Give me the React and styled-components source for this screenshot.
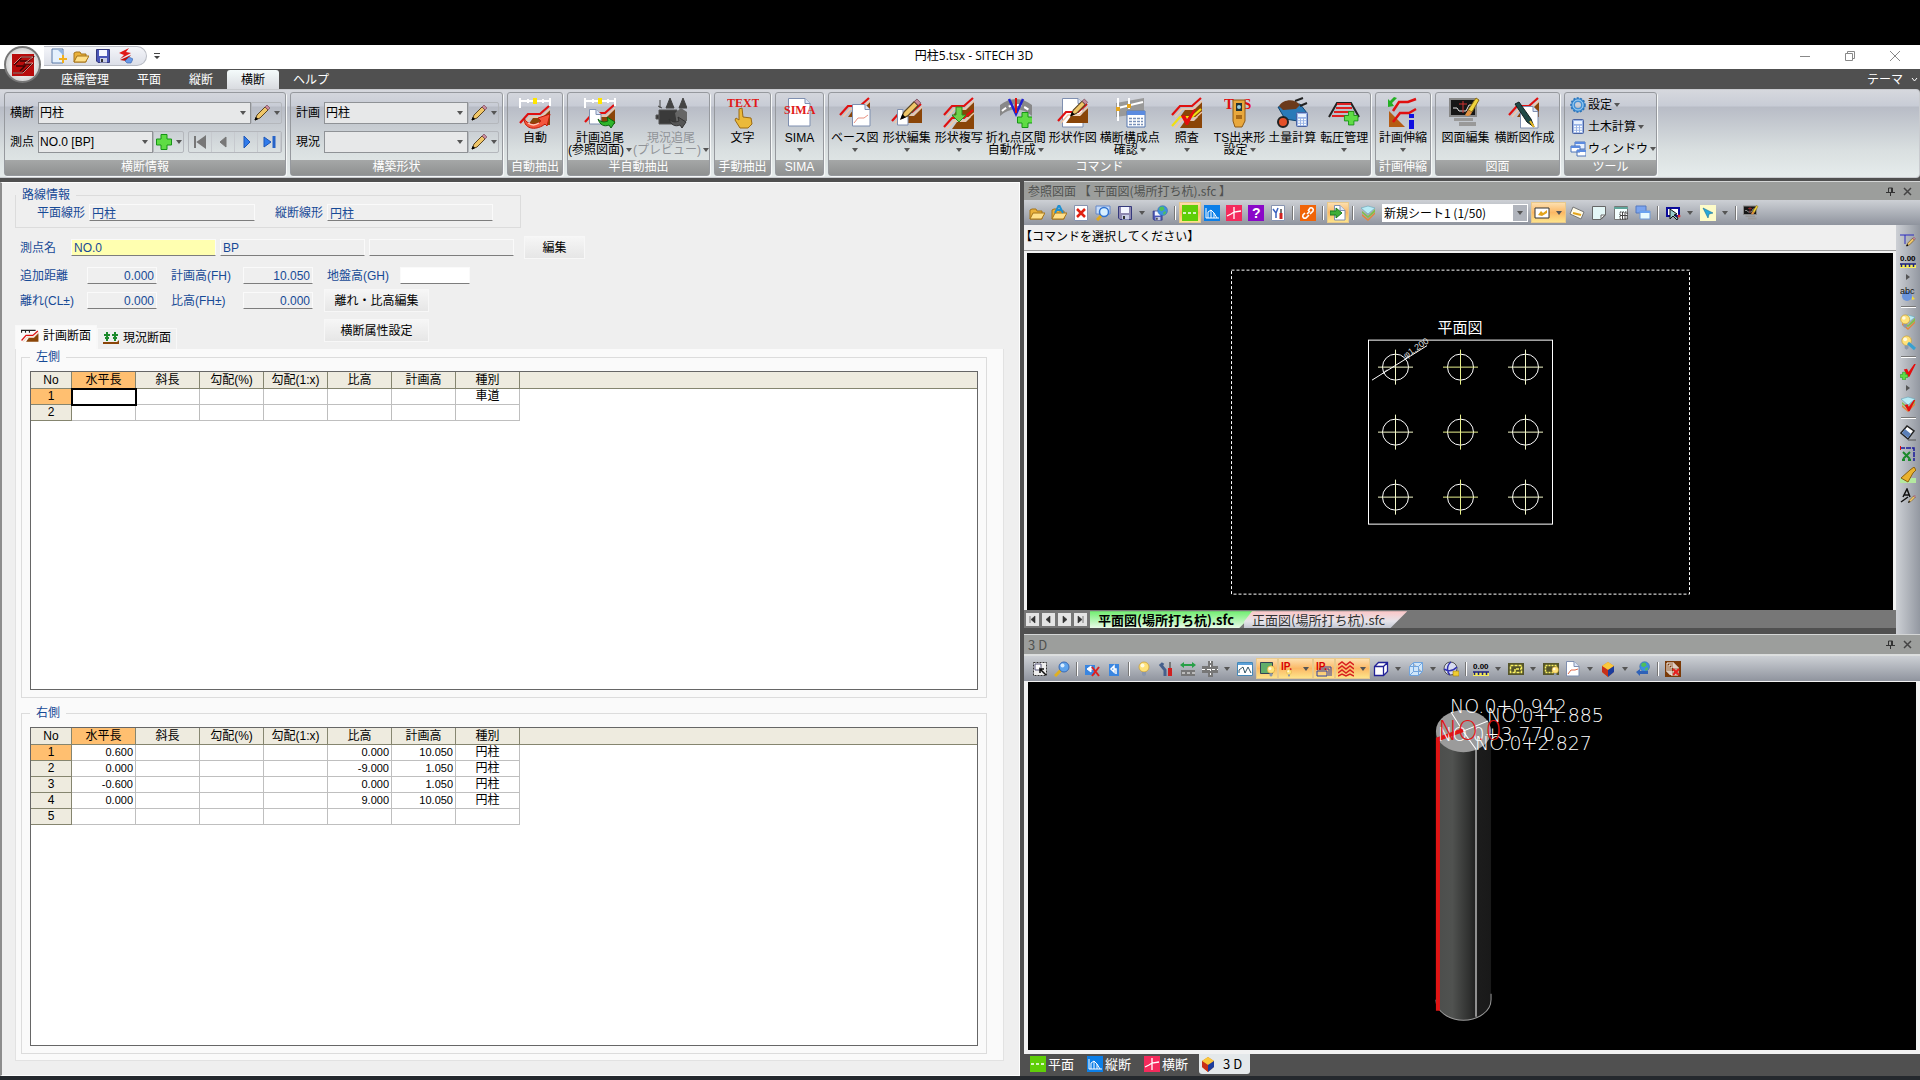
import React from "react";
import styled, { createGlobalStyle, css } from "styled-components";

const GlobalStyle = createGlobalStyle`
    * { box-sizing: border-box; }
    body {
        margin: 0;
        background: #000;
        font-family: "Liberation Sans", "Noto Sans CJK JP", sans-serif;
        font-size: 12px;
        line-height: 16px;
        color: #000;
    }
    button, input, select { font: inherit; color: inherit; margin: 0; padding: 0; }
    button { border: 0; background: none; }
`;

/* ---------- icons ---------- */

const Slope = ({ y = 0, fill = "#8a4508", line = "#e01010" }) => (
    <g transform={`translate(0 ${y})`}>
        <path d="M9 20 14 13H23L31 5V20Z" fill={fill} />
        <path d="M4 20 11 12H22L31 4" fill="none" stroke="#f0c8a8" strokeWidth="1.500" />
        <path d="M1 18 9 9H21L30 1" fill="none" stroke={line} strokeWidth="2.200" />
    </g>
);
const Ruler = () => (
    <g>
        <path d="M1 4H31M1 1V11M31 1V9M9 2V6M24 2V6" stroke="#fff" strokeWidth="2" />
        <path d="M16 1V7" stroke="#ffe600" strokeWidth="4" />
    </g>
);
const Sheet = ({ x = 0, y = 0, w = 15, h = 18 }) => (
    <g transform={`translate(${x} ${y})`}>
        <path d={`M.5 .5H${w - 5}L${w} 5.5V${h}H.5Z`} fill="#fff" stroke="#7f8fb0" />
        <path d={`M${w - 5} .5V5.5H${w}`} fill="#dbe5f7" stroke="#7f8fb0" />
    </g>
);
const Pen = ({ x = 0, y = 0, s = 1 }) => (
    <g transform={`translate(${x} ${y}) scale(${s})`}>
        <path d="M1 15 3 10 11 2 14 5 6 13Z" fill="#f0c668" stroke="#5a4420" />
        <path d="M11 2 13 0 16 3 14 5Z" fill="#c88a9a" stroke="#704050" strokeWidth=".6" />
        <path d="M1 15 2 12.500 3.500 14Z" fill="#000" stroke="#000" />
    </g>
);
const Plus = ({ x = 0, y = 0, s = 1 }) => (
    <path transform={`translate(${x} ${y}) scale(${s})`} d="M5 .5H11V5H15.500V11H11V15.500H5V11H.5V5H5Z" fill="#5fdc45" stroke="#179417" />
);
const GreenArrow = ({ fill = "#2fb52a", stroke = "#0c6210" }) => (
    <path d="M14 22C18 26 21 25 24 24L23 20 31 25 27 31 25 28C20 30 16 28 14 22Z" fill={fill} stroke={stroke} />
);
const Bulb = ({ x = 0, y = 0, s = 1 }) => (
    <g transform={`translate(${x} ${y}) scale(${s})`}>
        <circle cx="8" cy="6" r="5" fill="#ffe27a" stroke="#c99b2c" strokeWidth=".7" />
        <circle cx="6.500" cy="4.500" r="2" fill="#fffbe0" />
        <path d="M6 11H10V14L8 15.500 6 14Z" fill="#8c98ac" />
    </g>
);
const Check = ({ x = 0, y = 0, s = 1 }) => (
    <path transform={`translate(${x} ${y}) scale(${s})`} d="M1 7 5 6 7 10 14 0H16L8 16H6Z" fill="#e50d0d" />
);
const Layers = () => (
    <g>
        <path d="M2 9 8 14 15 7V9L8 16 2 11Z" fill="#e3863c" />
        <path d="M2 6 8 11 15 4V7L8 13 2 8Z" fill="#7fc04b" />
        <path d="M1 3 8 1 15 3 8 9Z" fill="#b8ecf6" stroke="#67a3b5" strokeWidth=".6" />
    </g>
);
const Folder = () => (
    <g>
        <path d="M1 14V5L3 4H7L8 6H13V14Z" fill="#eab13a" stroke="#a5741a" />
        <path d="M1 14 4 8H16L12.500 14Z" fill="#ffe08a" stroke="#a5741a" />
    </g>
);
const Disk = ({ fill = "#4a56b8" }) => (
    <g>
        <path d="M1.500 1.500H14.500V14.500H3L1.500 13Z" fill={fill} stroke="#34397c" />
        <path d="M4 2H12V8H4Z" fill="#f4f6ff" />
        <path d="M5 10H12V14.500H5Z" fill="#c9cde6" />
        <path d="M6 11H8V14H6Z" fill="#333" />
    </g>
);
const Globe = ({ x = 0, y = 0, s = 1 }) => (
    <g transform={`translate(${x} ${y}) scale(${s})`}>
        <circle cx="8" cy="8" r="7" fill="#3d8fe0" stroke="#2a62a8" strokeWidth=".7" />
        <path d="M4 3 9 2 11 6 7 9 3 7ZM9 10 13 9 12 13 9 14Z" fill="#4fbf58" />
    </g>
);
const Ip = () => (
    <text x="0" y="9" fontSize="10" fontWeight="700" fill="#d80000" fontFamily="Liberation Sans">IP.</text>
);
const Calc = ({ x = 0, y = 0 }) => (
    <g transform={`translate(${x} ${y})`}>
        <rect x=".5" y=".5" width="11" height="14" rx="1" fill="#9ab4e6" stroke="#4a62a0" />
        <path d="M2 2H10V5H2Z" fill="#e9f2ff" />
        <path d="M2 7.500H10M2 10H10M2 12.500H10" stroke="#fff" strokeWidth="1.500" strokeDasharray="2 1" />
    </g>
);
const Screen = () => (
    <g>
        <rect x="1" y="2" width="26" height="17" fill="#161616" stroke="#888" strokeWidth="2" />
        <path d="M4 11H8L10 14H17L20 8H24" fill="none" stroke="#e8e8e8" />
        <path d="M14 4V16M10 7H18" stroke="#d03030" />
        <path d="M5 21H24V24H5ZM10 25H27V29H10Z" fill="#999" />
        <path d="M19 13 27 1 30 3 23 15Z" fill="#f0d43c" stroke="#87681b" />
        <path d="M19 13 23 15C22 19 18 20 16 18Z" fill="#e09040" />
    </g>
);

const icons32 = {
    auto: <><Slope y={8} /><Ruler /><path d="M5 21C8 28 17 29 22 24L19 21 31 17 28 29 26 27C19 33 5 34 5 21Z" fill="#f4563c" stroke="#c01808" /><path d="M9 26C13 29 17 28 20 26" stroke="#ffc8b8" strokeWidth="1.500" fill="none" /></>,
    trace: <><Slope y={7} /><Ruler /><Sheet x={5} y={12} w={12} h={15} /><GreenArrow /></>,
    preview: <><path d="M5 3V11M3 9 7 11M15 1 11 11H19ZM28 1 24 11H32Z" stroke="#444" fill="#444" /><path d="M4 13H22V27H4ZM1 18H4V22H1Z" fill="#3a3a3a" stroke="#555" /><path d="M20 16 26 11 32 15V24L22 27Z" fill="#666" /><GreenArrow fill="#555" stroke="#333" /></>,
    text: <><text x="0" y="10" fontSize="12" fontWeight="700" fill="#e01818" fontFamily="Liberation Serif">TEXT</text><path d="M12 12 15 11 16 20 24 21 25 27 21 31H13L8 23 9 21 12 23Z" fill="#eab93a" stroke="#9a6a14" /></>,
    sima: <><Sheet x={4} y={1} w={22} h={28} /><text x="0" y="17" fontSize="12" fontWeight="700" fill="#e01818" fontFamily="Liberation Serif">SIMA</text></>,
    base: <><Slope /><Sheet x={13} y={7} w={18} h={22} /><path d="M15 26 19 21H25L29 18" stroke="#e89080" fill="none" /></>,
    edit: <><Slope y={6} /><Sheet x={6} y={12} w={11} h={16} /><Pen x={9} y={2} s={1.300} /></>,
    copy: <><Slope /><Slope y={12} /><path d="M13 10H19V18H23L16 25 9 18H13Z" fill="#6fd04a" stroke="#2a8c20" /></>,
    bend: <><path d="M0 8C10 0 22 0 32 8V19C22 10 10 10 0 19Z" fill="#888" /><path d="M2 14C11 6 21 6 30 14" fill="none" stroke="#fff" strokeWidth="2" strokeDasharray="5 3" /><path d="M9 2 16 17 23 2" fill="none" stroke="#2020d0" strokeWidth="2.500" /><path d="M16 1V16" stroke="#e01010" strokeWidth="2" /><Plus x={17} y={15} /></>,
    draw: <><Sheet x={5} y={1} w={21} h={29} /><Slope y={6} /><Pen x={13} y={2} s={1.100} /></>,
    points: <><path d="M2 6 30 1V16L2 20Z" fill="#999" /><path d="M4 1V24M15 1V12M4 11 29 5" stroke="#fff" strokeWidth="2" /><path d="M2 10H6V14H2ZM13 7H17V11H13Z" fill="#e6a51c" /><path d="M13 14H31V30H13Z" fill="#fff" stroke="#5577b0" /><path d="M13 14H31V18H13Z" fill="#5b8be0" /><path d="M15 21.500H29M15 24.500H29M15 27.500H29" stroke="#7890b8" strokeWidth="1.500" strokeDasharray="3 1" /></>,
    verify: <><Slope /><Slope y={11} line="#f0e010" /><Check x={9} y={12} /></>,
    ts: <><text x="0" y="12" fontSize="15" fontWeight="700" fill="#e01010" fontFamily="Liberation Serif">T</text><text x="19" y="12" fontSize="15" fontWeight="700" fill="#e01010" fontFamily="Liberation Serif">S</text><path d="M9 3H21V24L18 30H11L9 24Z" fill="#e9a83c" stroke="#8e5a14" /><path d="M12 6H18V14H12Z" fill="#233" /><circle cx="15" cy="10" r="2" fill="#9cd" /><path d="M12 18H18V22H12Z" fill="#a86a18" /></>,
    barrow: <><path d="M2 10 24 7 31 16 22 24 9 22Z" fill="#2a7ab8" stroke="#10456f" /><path d="M3 9C7 2 19 1 24 8L20 12 7 13Z" fill="#6b3a1c" /><circle cx="7" cy="25" r="5" fill="#e45028" stroke="#222" strokeWidth="2" /><path d="M19 4 27 1M24 9 31 6" stroke="#222" strokeWidth="2" /><Calc x={20} y={15} /></>,
    roller: <><path d="M1 20 9 6H23L31 20" fill="none" stroke="#222" strokeWidth="2" /><path d="M9 7H23M8 11H24M6 15H26M4 19H28" stroke="#e02020" strokeWidth="2" /><Plus x={16} y={14} s={0.900} /></>,
    stretch: <><path d="M2 14 18 30H2Z" fill="#b55c14" /><path d="M6 14 12 5H21L29 2M6 25 13 16H22L29 12" fill="none" stroke="#e01010" strokeWidth="2.500" /><path d="M10 1 5 6 7 9 1 10V2L3 4 7 0Z" fill="#23b023" /><path d="M22 17H27V21H22ZM22 23H27V32H22Z" fill="#1010e0" /></>,
    screen: <Screen />,
    section: <><Slope /><Sheet x={12} y={9} w={18} h={22} /><path d="M7 7 11 5 23 22 26 30 19 25Z" fill="#1f4a48" stroke="#102020" /><path d="M22 24 26 30" stroke="#e8b820" strokeWidth="2" /></>,
};

const icons16 = {
    newFile: <><path d="M1 1H12V15H1Z" fill="#e5f1fd" stroke="#5a7aa8" /><path d="M7 2H12V7Z" fill="#8fb4e0" /><path d="M8 11H16M12 7V15" stroke="#f2b01e" strokeWidth="2" /></>,
    folder: <Folder />,
    disk: <Disk />,
    brand: <><path d="M2 5 12 0 9 4 14 5 3 11 7 7Z" fill="#e01818" /><path d="M3 12 14 7 9 13Z" fill="#c01010" /><path d="M8 13 12 9 16 11 14 15H10Z" fill="#6a9ae8" stroke="#345fa8" strokeWidth=".6" /></>,
    pen: <Pen />,
    plus: <Plus />,
    first: <path d="M3 2V14M13 3 6 8 13 13Z" fill="#777" stroke="#777" strokeWidth="2" />,
    prev: <path d="M11 3 5 8 11 13Z" fill="#777" stroke="#777" />,
    next: <path d="M6 2 12 8 6 14Z" fill="#2f7bea" stroke="#1d56b8" />,
    last: <><path d="M3 3 10 8 3 13Z" fill="#2f7bea" stroke="#1d56b8" /><path d="M13 2V14" stroke="#2563c8" strokeWidth="3" /></>,
    gear: <><circle cx="8" cy="8" r="5" fill="none" stroke="#3f8fd6" strokeWidth="4" /><circle cx="8" cy="8" r="7" fill="none" stroke="#2872b8" strokeWidth="1.500" strokeDasharray="2 1.500" /><circle cx="8" cy="8" r="5" fill="none" stroke="#a8d4f4" /></>,
    calc: <Calc x={2} y={0} />,
    windows: <><path d="M5 1H15V8H5Z" fill="#e8f1ff" stroke="#4a72b8" /><path d="M5 1H15V3H5Z" fill="#5b8be0" /><path d="M1 5H10V11H1ZM7 9H16V15H7Z" fill="#fff" stroke="#4a72b8" /><path d="M1 5H10V7H1ZM7 9H16V11H7Z" fill="#5b8be0" /></>,
    plan: <><path d="M0 0H16V16H0Z" fill="#5fce08" /><path d="M1 8H16" stroke="#fff" strokeWidth="1.500" strokeDasharray="3 2" /></>,
    profile: <><path d="M0 0H16V16H0Z" fill="#0b7fe8" /><path d="M2 3V13H15M4 13V7L7 5 10 8 13 13M7 5V13M10 8V13" fill="none" stroke="#fff" /></>,
    cross: <><path d="M0 0H16V16H0Z" fill="#f42a5c" /><path d="M1 11 5 9 8 7 15 6M8 2V14" fill="none" stroke="#fff" strokeWidth="1.300" /></>,
    help: <><path d="M0 0H16V16H0Z" fill="#8a08c8" /><text x="4" y="13" fontSize="14" fontWeight="700" fill="#fff" fontFamily="Liberation Sans">?</text></>,
    folderA: <><Folder /><path d="M4 8 8 0 12 8M5 5H11" fill="none" stroke="#208fd0" strokeWidth="2" /></>,
    close: <><path d="M1.500 .5H14.500V15.500H1.500Z" fill="#fff" stroke="#8794b0" /><path d="M4 4 12 12M12 4 4 12" stroke="#e02010" strokeWidth="2.500" /></>,
    search: <><path d="M1 1H15V9H1Z" fill="#c7dcf8" stroke="#6487c8" /><circle cx="9" cy="7" r="4.500" fill="#d8f0ff" stroke="#2f72d0" strokeWidth="1.500" /><path d="M6 11 2 15" stroke="#e0a820" strokeWidth="3" /></>,
    grayDisk: <Disk fill="#8e88b0" />,
    globeDisk: <><g transform="translate(0 5) scale(.7)"><Disk /></g><Globe x={5} s={0.700} /></>,
    tools: <><path d="M1.500 .5H14.500V15.500H1.500Z" fill="#fff" stroke="#8794b0" /><path d="M3 4 6 8V13M8 3 6 8" stroke="#3a62c0" strokeWidth="1.500" fill="none" /><path d="M11 4V8" stroke="#777" strokeWidth="2" /><path d="M11 8V14" stroke="#d02020" strokeWidth="3" /></>,
    wrench: <><path d="M2 3 7 9V15M5 2 3 5" stroke="#46608c" strokeWidth="3" fill="none" /><path d="M12 1V8" stroke="#777" strokeWidth="2" /><path d="M12 7V15" stroke="#d02020" strokeWidth="4" /></>,
    link: <><path d="M0 0H16V16H0Z" fill="#f06408" /><path d="M7 9 10 6M5 8 3 10C2 12 4 14 6 13L9 10M8 6 10 3C12 2 14 4 13 6L10 9" fill="none" stroke="#fff" strokeWidth="1.600" /></>,
    importDoc: <><Sheet x={4} w={11} h={15} /><path d="M0 6H6V3L12 8 6 13V10H0Z" fill="#3fae38" stroke="#1d7a20" /></>,
    layers: <Layers />,
    picture: <><path d="M1 3H15V13H1Z" fill="#fff" stroke="#333" /><path d="M4 10 7 6 9 8 13 5V8L8 11Z" fill="#e2a41c" /></>,
    card: <><path d="M4 2 15 7 12 14 1 9Z" fill="#fffbe8" stroke="#777" /><path d="M4 8 12 10" stroke="#e2a41c" strokeWidth="2" /></>,
    page: <><path d="M1.500 1.500H14.500V10L10 14.500H1.500Z" fill="#e4f6f6" stroke="#666" /><path d="M10 14V10H14Z" fill="#fff" stroke="#666" /></>,
    pageGrid: <><path d="M1.500 1.500H14.500V14.500H1.500Z" fill="#f4ffff" stroke="#777" /><path d="M1 3H15" stroke="#5fa59a" strokeWidth="2" /><path d="M7 7H14V14H7Z" fill="#fff" stroke="#333" strokeDasharray="1.500 1" /><path d="M9.500 7V14M12 7V14M7 10.500H14" stroke="#444" /></>,
    cascade: <><path d="M1 1H11V8H1Z" fill="#7ba4ee" stroke="#5578c0" /><path d="M5 6H15V14H5Z" fill="#e8fafe" stroke="#6e9ad8" /><path d="M5 6H15V8H5Z" fill="#6aa2f0" /></>,
    select: <><path d="M2 3H14V11H2Z" fill="#fff" stroke="#0a0a9a" strokeWidth="2" /><path d="M5 4V14L8 11 12 15 13 13 9 10 12 9Z" fill="#9cc" stroke="#111" /><circle cx="14" cy="11" r="1.500" fill="#e03030" /></>,
    pointer: <><path d="M0 0H16V16H0Z" fill="#fdfbc8" /><path d="M3 3 13 8 9 9 8 13Z" fill="#28a8d8" stroke="#187098" strokeWidth=".6" /></>,
    screen: <g transform="scale(.5)"><Screen /></g>,
    zoomArea: <><path d="M1.500 1.500H14.500V14.500H1.500Z" fill="#eee" stroke="#333" strokeDasharray="2 1" /><path d="M3 3H9V9H3Z" fill="#fff" stroke="#557" /><path d="M14 14 8 8V12M8 8H12" stroke="#111" fill="none" strokeWidth="1.500" /></>,
    lens: <><path d="M7 9 1 15" stroke="#e0b020" strokeWidth="3" /><circle cx="10" cy="6" r="5" fill="#5fa4ec" stroke="#3a6ab4" /><circle cx="8.500" cy="4.500" r="2" fill="#d8ecff" /></>,
    undoX: <><path d="M1 4H11V14H1Z" fill="#3a86e0" /><path d="M3 8 7 5V11ZM6 8H10" fill="#fff" stroke="#fff" /><path d="M8 6 15 15M15 6 8 15" stroke="#e02020" strokeWidth="2" /></>,
    undo: <><path d="M3 3H13V15H3Z" fill="#3a86e0" /><path d="M5 8 8 5V11ZM8 8H10V13" fill="none" stroke="#fff" strokeWidth="1.500" /></>,
    bulb: <Bulb />,
    widthRoad: <><path d="M0 4 4 1V3H12V1L16 4 12 7V5H4V7Z" fill="#28a048" /><path d="M1 9H15V15H1Z" fill="#777" /><path d="M2 12H15" stroke="#fff" strokeDasharray="3 2" /></>,
    road: <><path d="M0 5H16V12H0ZM6 0H11V16H6Z" fill="#777" /><path d="M0 8.500H16" stroke="#fff" strokeDasharray="3 2" /><path d="M8.500 0V16" stroke="#fff" strokeDasharray="2 2" /></>,
    frameView: <><path d="M.5 1.500H15.500V14.500H.5Z" fill="#fff" stroke="#4488b8" /><path d="M1 2H15V4H1Z" fill="#5ba0d8" /><path d="M2 12V9L6 6 8 12 11 6 14 12" fill="none" stroke="#356" /></>,
    greenBulb: <><path d="M1.500 1.500H13.500V12.500H1.500Z" fill="#62ae6a" stroke="#345" /><Bulb x={6} y={4} s={0.750} /></>,
    ipBulb: <><Ip /><Bulb x={4} y={8} s={0.500} /></>,
    ipStack: <><path d="M5 6H15V15M3 8H13V15M1 10H11V15H1Z" fill="none" stroke="#3040a0" /><Ip /></>,
    waves: <path d="M0 4 4 1 8 4 12 1 16 4M0 8 4 5 8 8 12 5 16 8M0 12 4 9 8 12 12 9 16 12M0 15 4 13 8 15 12 13 16 15" fill="none" stroke="#d82020" strokeWidth="1.500" />,
    cube: <path d="M1.500 5.500 5.500 1.500H14.500V10.500L10.500 14.500H1.500ZM1.500 5.500H10.500V14.500M10.500 5.500 14.500 1.500" fill="#fff" stroke="#222298" strokeWidth="1.300" />,
    glassCube: <path d="M1.500 5.500 5.500 1.500H14.500V10.500L10.500 14.500H1.500ZM1.500 5.500H10.500V14.500M10.500 5.500 14.500 1.500M5.500 2V10.500H14M5.500 10.500 2 14" fill="#cfe6fa" stroke="#70a4de" />,
    orbit: <><circle cx="7.500" cy="7.500" r="6.500" fill="#d8dcf0" stroke="#555" /><path d="M8 1C3 5 4 11 7 14M1 8C6 11 11 9 14 6" fill="none" stroke="#3030b0" strokeWidth="1.500" /><path d="M10 10H16V15H10Z" fill="#f0cc30" stroke="#99791b" strokeWidth=".6" /></>,
    dims: <><text x="0" y="8" fontSize="8" fontWeight="700" fontFamily="Liberation Sans">0.00</text><path d="M0 11H16V15H0Z" fill="#f6ec5a" /><path d="M0 11H16M1.500 11V14M5.500 11V14M9.500 11V14M13.500 11V14" stroke="#1c2280" strokeWidth="1.500" /></>,
    plate: <><path d="M0 2H16V14H0Z" fill="#55552a" /><path d="M2.500 4.500H13.500V11.500H2.500ZM7 11V8H13" fill="none" stroke="#f8f060" strokeWidth="1.500" strokeDasharray="3 1" /></>,
    plateBulb: <><path d="M0 2H16V14H0Z" fill="#55552a" /><path d="M2.500 4.500H13.500V11.500H2.500Z" fill="none" stroke="#f8f060" strokeWidth="1.500" strokeDasharray="2 1" /><Bulb x={7} y={5} s={0.650} /></>,
    slopeSheet: <><Sheet x={1} w={13} h={15} /><path d="M3 13 6 9H10L13 8" stroke="#e06848" fill="none" /></>,
    block: <><path d="M2 5 8 1 14 5V11L8 16 2 11Z" fill="#e08020" /><path d="M2 5 8 1 14 5 8 9Z" fill="#fac83c" /><path d="M2 5 8 9V16L2 11Z" fill="#c83018" /><path d="M8 9 14 5V11L8 16Z" fill="#1c3c9c" /></>,
    globeSync: <><Globe x={4} s={0.700} /><path d="M1 11 5 8V10H13V13H5V15Z" fill="#2f62b8" /></>,
    closeAll: <><path d="M0 0H16V16H0Z" fill="#7a3a08" /><path d="M2 2H9V11H2ZM4 4H11V13H4ZM6 6H13V14H6Z" fill="#7a3a08" stroke="#fff" /><path d="M8 8 14 14M14 8 8 14" stroke="#e82020" strokeWidth="2" /></>,
    dimPen: <><path d="M0 3H14M5 3V12" stroke="#2a2ac0" /><g transform="translate(6 5) scale(.6)"><Pen /></g></>,
    abc: <><circle cx="7" cy="11" r="5" fill="#6a94dc" /><text x="0" y="9" fontSize="9" fontFamily="Liberation Sans" fill="#111">abc</text><path d="M12 11 15 14 12 15Z" fill="#f0d840" /></>,
    bulbLayers: <><Layers /><Bulb x={-2} s={0.900} /></>,
    bulbPen: <><Bulb x={-1} s={0.950} /><path d="M8 8 15 14" stroke="#38a0d0" strokeWidth="3" /></>,
    checkPlus: <><Check x={3} y={0} s={0.800} /><Plus x={0} y={8} s={0.500} /></>,
    checkLayers: <><Layers /><Check x={4} y={4} s={0.700} /></>,
    eraser: <><path d="M1 8 7 1 14 6 8 14Z" fill="#fff" stroke="#222" strokeWidth="1.500" /><path d="M5 4 11 9 8 13 2 8Z" fill="#5b7fb8" /><path d="M8 15H16" stroke="#555" /></>,
    scissor: <><path d="M0 2H14V15" fill="none" stroke="#1a1a9a" strokeWidth="1.500" strokeDasharray="5 1" /><path d="M0 0V4" stroke="#e01010" strokeWidth="2" /><path d="M3 6 10 13M10 6 3 13M2 14H5M8 14H11" stroke="#1c8a2c" strokeWidth="2" /></>,
    brush: <><path d="M0 11H16V16H0Z" fill="#b4e8a0" /><path d="M10 3 14 0 16 3 13 6 8 15 1 11Z" fill="#eab22c" stroke="#885f10" /></>,
    letterA: <><path d="M1 14 8 9M3 9 7 1 10 9M4 7H9" fill="none" stroke="#111" strokeWidth="1.500" /><g transform="translate(8 7) scale(.5)"><Pen /></g></>,
};

const Icon = ({ name }) => (
    <svg width="16" height="16" viewBox="0 0 16 16" aria-hidden="true">{icons16[name]}</svg>
);
const BigIcon = ({ name }) => (
    <svg width="32" height="32" viewBox="0 0 32 32" aria-hidden="true">{icons32[name]}</svg>
);
const Caret = () => (
    <svg width="6" height="4" viewBox="0 0 6 4" aria-hidden="true"><path d="M0 0H6L3 4Z" fill="#555" /></svg>
);

/* ---------- title bar, menu ---------- */

const Window = styled.div`
    display: flex;
    flex-direction: column;
    height: 100vh;
    min-height: 760px;
    padding-top: 45px;
    border-bottom: 4px solid #25292e;
    background: linear-gradient(#000 45px, #505050 45px);
`
const TitleBar = styled.header`
    position: relative;
    display: grid;
    grid-template-columns: 1fr auto 1fr;
    align-items: center;
    height: 24px;
    padding-bottom: 2px;
    background: #fff;
`
const AppButton = styled.button`
    position: absolute;
    left: 4px;
    top: 1px;
    width: 37px;
    height: 37px;
    display: grid;
    place-items: center;
    border: 2px solid #777;
    border-radius: 50%;
    background: radial-gradient(#fff 30%, #b5b5b5);
    z-index: 1;
`
const QuickBar = styled.div`
    display: flex;
    align-items: center;
    justify-self: start;
    height: 20px;
    margin-left: 44px;
    padding: 0 10px 0 4px;
    border: 1px solid #b9bcc4;
    border-left: 0;
    border-radius: 0 10px 10px 0;
    background: linear-gradient(#f4f5f9, #dcdfe8);
`
const QuickWrap = styled.div`
    display: flex;
    align-items: center;
    gap: 7px;
`
const AppTitle = styled.h1`
    margin: 0;
    padding-left: 28px;
    font-family: "Open Sans", "Noto Sans CJK JP", sans-serif;
    font-size: 12px;
    font-weight: 400;
`
const WindowButtons = styled.div`
    display: flex;
    justify-self: end;
    padding-right: 3px;
    button {
        width: 45px;
        height: 22px;
        display: grid;
        place-items: center;
    }
`
const MenuBar = styled.nav`
    display: flex;
    align-items: end;
    height: 20px;
    padding-left: 47px;
    background: #505050;
`
const MenuTab = styled.button`
    height: 19px;
    padding: 1px 14px 0;
    border-radius: 3px 3px 0 0;
    color: ${p => p.$active ? "#000" : "#fff"};
    background: ${p => p.$active ? "linear-gradient(#f4fbfb, #d9dbe0)" : "none"};
`
const ThemeButton = styled.button`
    display: flex;
    align-items: center;
    gap: 6px;
    height: 19px;
    margin-left: auto;
    padding-top: 1px;
    color: #fff;
`

/* ---------- ribbon ---------- */

const Ribbon = styled.div`
    display: flex;
    gap: 4px;
    height: 89px;
    padding: 2px 4px 1px;
    border: 1px solid #c9cbcf;
    border-left-width: 0;
    border-radius: 0 4px 4px 0;
    background: linear-gradient(#d6d8de, #c8ccd6 16px, #b8bcc6 17px, #d9dfe0 60px, #e6ecec);
`
const Group = styled.section`
    display: flex;
    flex-direction: column;
    flex: none;
    min-width: ${p => p.$w}px;
    border: 1px solid #96999e;
    border-radius: 3px;
    box-shadow: 1px 1px 0 #f6f8f8;
    h2 {
        margin: auto 0 0;
        height: 15px;
        font-size: 12px;
        line-height: 15px;
        font-weight: 400;
        text-align: center;
        color: #fff;
        background: linear-gradient(#a5a7a7, #8f9191);
    }
`
const GroupBody = styled.div`
    display: flex;
    justify-content: center;
    gap: ${p => p.$gap || 1}px;
`
const BigButton = styled.button`
    display: flex;
    flex-direction: column;
    align-items: center;
    min-width: ${p => p.$min || 50}px;
    padding-top: 4px;
    line-height: 12px;
    white-space: nowrap;
    color: ${p => p.disabled ? "#909398" : "#000"};
    svg { display: block; }
    span {
        display: flex;
        align-items: center;
        justify-content: center;
        gap: 2px;
        height: 12px;
    }
    span:first-of-type { margin-top: 3px; }
`
const Fields = styled.div`
    display: flex;
    flex-direction: column;
    gap: 7px;
    padding: 9px 3px 0 5px;
`
const FieldRow = styled.div`
    display: flex;
    height: 22px;
    align-items: stretch;
    label {
        width: 28px;
        line-height: 22px;
    }
`
const Combo = styled.span`
    display: grid;
    flex: ${p => p.$w ? "none" : 1};
    width: ${p => p.$w ? p.$w + "px" : "auto"};
    align-items: center;
    border: 1px solid ${p => p.$white ? "#fff" : "#8f9296"};
    background: ${p => p.$white ? "#fff" : "#e7e8e9"};
    select {
        grid-area: 1 / 1;
        width: 100%;
        padding: 0 1px;
        border: 0;
        background: none;
        appearance: none;
    }
    svg {
        grid-area: 1 / 1;
        justify-self: end;
        margin-right: 4px;
        pointer-events: none;
    }
    ${p => p.$white && css`
        background: linear-gradient(90deg, #fff calc(100% - 14px), #b0b4bc calc(100% - 14px));
    `}
`
const SplitButton = styled.button`
    display: flex;
    align-items: center;
    justify-content: center;
    gap: 4px;
    width: 31px;
    border: 1px solid #b4b7bc;
    border-radius: 0 2px 2px 0;
`
const NavButtons = styled.div`
    display: flex;
    flex: 1;
    margin-left: 4px;
    border: 1px solid #b4b7bc;
    border-radius: 2px;
    button {
        flex: 1;
        display: grid;
        place-items: center;
        border-right: 1px solid #c6c9ce;
    }
`
const ToolList = styled.div`
    display: flex;
    flex-direction: column;
    padding: 1px 0 0 5px;
    button {
        display: flex;
        align-items: center;
        gap: 2px;
        height: 22px;
        white-space: nowrap;
    }
`

/* ---------- left form ---------- */

const Workspace = styled.main`
    display: grid;
    flex: 1;
    min-height: 0;
    grid-template-columns: minmax(0, 17fr) minmax(0, 15fr);
    padding-top: 3px;
`
const FormPane = styled.div`
    display: flex;
    flex-direction: column;
    min-height: 0;
    margin-top: 1px;
    padding-top: 4px;
    border: 1px solid #fdfdfd;
    border-left: 2px solid #8d8d8d;
    background: #efefef;
    color: #174a96;
`
const GroupBox = styled.fieldset`
    display: flex;
    flex-direction: column;
    min-width: 0;
    margin: 0;
    padding: 6px 8px 7px;
    border: 1px solid #dcdcdc;
    legend { padding: 0 6px; }
`
const RouteBox = styled(GroupBox)`
    width: 506px;
    margin-left: 13px;
    padding: 1px 0 6px 21px;
    legend { margin-left: -21px; }
`
const RouteRow = styled.div`
    display: flex;
    align-items: center;
    height: 17px;
    gap: 4px;
    input + label { margin-left: 16px; }
`
const SideBox = styled(GroupBox)`
    flex: 1;
    min-height: 0;
`
const FormRow = styled.div`
    display: flex;
    align-items: center;
    height: ${p => p.$h || 25}px;
    padding-left: 15px;
`
const Pair = styled.div`
    display: flex;
    align-items: center;
    margin-right: ${p => p.$gap || 11}px;
    label {
        width: ${p => p.$label}px;
        padding-left: 3px;
        white-space: nowrap;
    }
`
const TextField = styled.input`
    width: ${p => p.$w}px;
    height: 17px;
    margin-right: ${p => p.$gap || 0}px;
    padding: 0 ${p => p.$right ? 2 : 4}px 0 2px;
    border: 1px solid #fafafa;
    border-bottom-color: #7d7d7d;
    border-radius: 0;
    background: ${p => p.$bg || "#efefef"};
    text-align: ${p => p.$right ? "right" : "left"};
`
const PushButton = styled.button`
    width: ${p => p.$w}px;
    height: 23px;
    border: 1px solid #f7f7f7;
    background: linear-gradient(#f6f6f6, #e6e6e6);
    color: #000;
`
const TabRow = styled.div`
    display: grid;
    grid-template-columns: 309px auto 1fr;
    height: 30px;
    margin-top: 2px;
    padding-left: 13px;
`
const Tabs = styled.div`
    display: flex;
    align-items: end;
`
const SectionTab = styled.button`
    display: flex;
    align-items: center;
    gap: 4px;
    height: ${p => p.$active ? 24 : 21}px;
    padding: 0 5px 3px;
    border: 1px solid #f8f8f8;
    border-bottom: 0;
    background: ${p => p.$active ? "#fafafa" : "#efefef"};
    color: #000;
`
const TabPanel = styled.div`
    display: flex;
    flex: 1;
    flex-direction: column;
    gap: 7px;
    min-height: 0;
    margin: 0 15px 14px 13px;
    padding: 0 16px 6px 5px;
    border: 1px solid #e2e2e2;
    border-top: 0;
    background: #fafafa;
`
const GridFrame = styled.div`
    flex: 1;
    min-height: 0;
    overflow: hidden;
    border: 1px solid #666;
    background: #fff;
    color: #000;
`
const Grid = styled.table`
    width: 100%;
    table-layout: fixed;
    border-spacing: 0;
    th, td {
        height: 16px;
        padding: 0 2px;
        line-height: 15px;
        font-weight: 400;
        white-space: nowrap;
        border-right: 1px solid #bfbfbf;
        border-bottom: 1px solid #bfbfbf;
    }
    th {
        background: #eeebdf;
        border-color: #85856f;
    }
    thead th { height: 17px; }
    thead th:last-child { border-right: 0; }
    td:last-child { border: 0; }
    .hot { background: #ffbf70; }
`
const Cell = styled.td`
    text-align: ${p => p.$text ? "center" : "right"};
    font-size: ${p => p.$text ? 12 : 11}px;
    ${p => p.$focus && css`
        outline: 2px solid #000;
        outline-offset: -1px;
    `}
`

/* ---------- right panes ---------- */

const ViewColumn = styled.div`
    display: flex;
    flex-direction: column;
    min-height: 0;
    padding-left: 4px;
`
const Pane = styled.section`
    display: flex;
    flex-direction: column;
    flex: ${p => p.$flex} 1 0;
    min-height: 0;
    border-top: 1px solid #d4d6d6;
`
const PaneTitle = styled.header`
    display: flex;
    align-items: center;
    flex: none;
    height: ${p => p.$solid ? 21 : 18}px;
    padding: 0 4px;
    border-bottom: ${p => p.$solid ? 2 : 0}px solid #dcdede;
    background: #9c9e9c;
    h2 {
        flex: 1;
        margin: 0;
        font-family: "Noto Sans CJK JP", sans-serif;
        font-size: ${p => p.$solid ? 13 : 12}px;
        font-weight: 400;
        line-height: 18px;
        color: #505250;
    }
    button {
        width: 17px;
        height: 16px;
        display: grid;
        place-items: center;
    }
`
const Toolbar = styled.div`
    display: flex;
    align-items: center;
    flex: none;
    height: 25px;
    padding-left: ${p => p.$pad}px;
    background: linear-gradient(#cdd0d5, #8f949e);
`
const ToolButton = styled.button`
    display: flex;
    align-items: center;
    height: 21px;
    padding: 0 3px;
    ${p => p.$on && css`
        background: linear-gradient(#fde3b6, #fbb865 50%, #fde88e);
        box-shadow: inset 0 0 0 1px #e8c98c;
    `}
    svg + svg { margin: 0 1px 0 6px; }
`
const Divider = styled.span`
    flex: none;
    width: ${p => p.$flat ? 15 : 2}px;
    height: ${p => p.$flat ? 2 : 14}px;
    margin: ${p => p.$flat ? "3px 0" : "0 3px"};
    border: 0 solid #fff;
    border-width: ${p => p.$flat ? "0 0 1px" : "0 1px 0 0"};
    background: #777;
`
const SheetPicker = styled.div`
    display: flex;
    margin: 0 3px;
    font-family: "Noto Sans CJK JP", sans-serif;
`
const DrawingArea = styled.div`
    display: grid;
    grid-template-columns: minmax(0, 1fr) 24px;
    flex: 1;
    min-height: 0;
`
const DrawingMain = styled.div`
    display: flex;
    flex-direction: column;
    min-height: 0;
    background: #505050;
`
const Prompt = styled.p`
    flex: none;
    height: 26px;
    margin: 0;
    line-height: 25px;
    border-bottom: 1px solid #999;
    background: #efefef;
    span { margin-left: -4px; }
`
const Canvas = styled.div`
    flex: 1;
    min-height: 0;
    border: 3px solid #f2f2f2;
    border-width: ${p => p.$solid ? "1px 4px 4px" : "2px 3px 0"};
    background: #000;
    svg {
        display: block;
        width: 100%;
        height: 100%;
    }
`
const SheetBar = styled.div`
    display: flex;
    flex: none;
    height: 24px;
    padding: 1px 2px 0;
    border-bottom: 6px solid #505050;
    background: #777;
`
const PageButton = styled.button`
    width: 13px;
    height: 13px;
    margin: 2px 3px 0 0;
    display: grid;
    place-items: center;
    background: #e4e4e4;
`
const SheetTab = styled.button`
    height: 17px;
    margin-right: -12px;
    padding: 0 22px 0 8px;
    font-family: "Noto Sans CJK JP", sans-serif;
    font-size: 13px;
    font-weight: ${p => p.$active ? 700 : 400};
    line-height: 17px;
    white-space: nowrap;
    color: ${p => p.$active ? "#000" : "#333"};
    clip-path: polygon(${p => p.$active ? "0" : "8px"} 0, 100% 0, calc(100% - 17px) 100%, 0 100%, 0 ${p => p.$active ? "0" : "60%"});
    background: ${p => p.$active ? "linear-gradient(#6fee6f, #eafbe9)" : "linear-gradient(#fcc6c6, #e6e4ea 60%, #c4c8d2)"};
`
const SideTools = styled.div`
    display: flex;
    flex-direction: column;
    align-items: center;
    padding-top: 4px;
    background: linear-gradient(90deg, #cdd0d5, #9398a1);
    button {
        flex: none;
        height: 21px;
        display: grid;
        place-items: center;
    }
    button.more { height: 11px; }
`
const ViewTabs = styled.nav`
    display: flex;
    flex: none;
    height: 22px;
    padding-left: 6px;
    font-family: "Noto Sans CJK JP", sans-serif;
    font-size: 13px;
`
const ViewTab = styled.button`
    display: flex;
    align-items: center;
    gap: 2px;
    height: 20px;
    margin-right: 13px;
    color: #fff;
    ${p => p.$active && css`
        gap: 7px;
        margin-left: -2px;
        padding: 0 8px 0 1px;
        border-radius: 0 0 3px 3px;
        color: #000;
        background: #e4e8ea;
    `}
`

/* ---------- data ---------- */

const commands = [
    ["base", "ベース図", "", true],
    ["edit", "形状編集", "", true],
    ["copy", "形状複写", "", true],
    ["bend", "折れ点区間", "自動作成", true],
    ["draw", "形状作図"],
    ["points", "横断構成点", "確認", true],
    ["verify", "照査", "", true],
    ["ts", "TS出来形", "設定", true],
    ["barrow", "土量計算"],
    ["roller", "転圧管理", "", true],
];

const columns = ["水平長", "斜長", "勾配(%)", "勾配(1:x)", "比高", "計画高", "種別"];
const leftRows = [
    ["", "", "", "", "", "", "車道"],
    ["", "", "", "", "", "", ""],
];
const rightRows = [
    ["0.600", "", "", "", "0.000", "10.050", "円柱"],
    ["0.000", "", "", "", "-9.000", "1.050", "円柱"],
    ["-0.600", "", "", "", "0.000", "1.050", "円柱"],
    ["0.000", "", "", "", "9.000", "10.050", "円柱"],
    ["", "", "", "", "", "", ""],
];

const sheetTools = [
    ["folder"], ["folderA"], ["close"], ["search"], ["grayDisk", "v"], ["globeDisk"], ["|"],
    ["plan", "on"], ["profile"], ["cross"], ["help"], ["tools"], ["|"],
    ["link"], ["|"], ["importDoc", "on"], ["|"], ["layers"],
];
const sheetTools2 = [
    ["picture", "on v"], ["card"], ["page"], ["pageGrid"], ["cascade"], ["|"],
    ["select", "v"], ["pointer", "v"], ["|"], ["screen"],
];
const solidTools = [
    ["zoomArea"], ["lens"], ["|"], ["undoX"], ["undo"], ["|"],
    ["bulb"], ["wrench"], ["widthRoad"], ["road", "v"], ["frameView"],
    ["greenBulb", "on"], ["ipBulb", "on v"], ["ipStack", "on"], ["waves", "on v"],
    ["cube", "v"], ["glassCube", "v"], ["orbit"], ["|"],
    ["dims", "v"], ["plate", "v"], ["plateBulb"], ["slopeSheet", "v"], ["block", "v"], ["globeSync"], ["|"],
    ["closeAll"],
];
const sideTools = ["dimPen", "dims", ">", "abc", "|", "bulbLayers", "bulbPen", "|", "checkPlus", ">", "checkLayers", "|", "eraser", "scissor", "brush", "letterA"];

/* ---------- parts ---------- */

function Command({ icon, text, sub, caret, ...rest }) {
    return (
        <BigButton {...rest}>
            <BigIcon name={icon} />
            <span>{text}</span>
            <span>{sub}{caret && <Caret />}</span>
        </BigButton>
    )
}

function Tools({ list }) {
    return list.map(([name, flags = ""], i) => name === "|"
        ? <Divider key={i} />
        : (
            <ToolButton key={i} aria-label={name} $on={flags.includes("on")}>
                <Icon name={name} />
                {flags.includes("v") && <Caret />}
            </ToolButton>
        ))
}

function SectionTable({ title, rows, focus }) {
    return (
        <SideBox>
            <legend>{title}</legend>
            <GridFrame>
                <Grid aria-label={title}>
                    <colgroup>
                        <col width="41" />
                        {columns.map(c => <col key={c} width="64" />)}
                        <col />
                    </colgroup>
                    <thead>
                        <tr>
                            <th>No</th>
                            {columns.map((c, i) => <th key={c} className={i === 0 ? "hot" : ""}>{c}</th>)}
                            <th />
                        </tr>
                    </thead>
                    <tbody>
                        {rows.map((row, r) => (
                            <tr key={r}>
                                <th className={r === 0 ? "hot" : ""}>{r + 1}</th>
                                {row.map((v, c) => (
                                    <Cell key={c} $text={c === 6} $focus={focus && r === 0 && c === 0}>{v}</Cell>
                                ))}
                                <td />
                            </tr>
                        ))}
                    </tbody>
                </Grid>
            </GridFrame>
        </SideBox>
    )
}

function PaneButtons() {
    return (
        <>
            <button aria-label="固定">
                <svg width="9" height="9" viewBox="0 0 9 9"><path d="M2.500 1H6.500V5.500M2.500 1V5.500M0 5.500H9M5.500 1V5M4.500 5.500V9" fill="none" stroke="#333" /></svg>
            </button>
            <button aria-label="閉じる">
                <svg width="9" height="9" viewBox="0 0 9 9"><path d="M1 1 8 8M8 1 1 8" stroke="#444" strokeWidth="1.500" /></svg>
            </button>
        </>
    )
}

function PlanDrawing() {
    const xs = [1395, 1460, 1525];
    const ys = [367, 432, 497];
    return (
        <svg viewBox="1027 254 866 356">
            <rect x="1231.500" y="270.500" width="458" height="324" fill="none" stroke="#fff" strokeDasharray="3 2" />
            <rect x="1368.500" y="340.500" width="184" height="184" fill="none" stroke="#fff" />
            <text x="1460" y="333" textAnchor="middle" fontSize="15" fill="#fff" fontFamily="Noto Sans CJK JP">平面図</text>
            {ys.map(y => xs.map(x => (
                <g key={x + "-" + y} fill="none">
                    <circle cx={x + 0.500} cy={y + 0.500} r="13" stroke="#fff" />
                    <path d={`M${x - 17} ${y + 0.500}H${x + 18}M${x + 0.500} ${y - 17}V${y + 18}`} stroke={x === 1460 ? "#e8f08c" : "#f4f8c8"} />
                </g>
            )))}
            <path d="M1372 380.500 1427 346M1383 374 1387 370M1405 360 1409 356" stroke="#fff" fill="none" />
            <text transform="translate(1406 359) rotate(-35)" fontSize="9" fill="#ddd" fontFamily="Liberation Sans">φ1,200</text>
        </svg>
    )
}

function SolidView() {
    return (
        <svg viewBox="1028 683 886 367">
            <defs>
                <linearGradient id="body">
                    <stop offset="0" stopColor="#4c4e4c" />
                    <stop offset=".3" stopColor="#505250" />
                    <stop offset=".6" stopColor="#303130" />
                    <stop offset=".75" stopColor="#1c1c1c" />
                    <stop offset="1" stopColor="#191919" />
                </linearGradient>
            </defs>
            <path d="M1435 732V1000A27.500 20.500 0 0 0 1490 1000V732Z" fill="url(#body)" />
            <path d="M1435 1000A27.500 20.500 0 0 0 1490 1000V994" fill="none" stroke="#999" />
            <ellipse cx="1462.500" cy="732" rx="27.500" ry="21" fill="#9b9b9b" />
            <path d="M1450 713 1462 732 1487 722M1462 732 1475 750V1017" fill="none" stroke="#fff" />
            <path d="M1437 1011V740L1462 731" fill="none" stroke="#e01414" strokeWidth="4" />
            <g fontFamily="DejaVu Sans" fontWeight="200" fontSize="19" fill="#fff">
                <text x="1449" y="714">NO.0+0.942</text>
                <text x="1486" y="723">NO.0+1.885</text>
                <text x="1437" y="742">NO.0+3.770</text>
                <text x="1474" y="751">NO.0+2.827</text>
                <text x="1437" y="741" fontSize="26" fill="#e01414">NO.0</text>
            </g>
        </svg>
    )
}

function TopRibbon() {
    return (
        <Ribbon>
            <Group $w={282}>
                <Fields>
                    <FieldRow>
                        <label htmlFor="cross">横断</label>
                        <Combo><select id="cross"><option>円柱</option></select><Caret /></Combo>
                        <SplitButton aria-label="横断を編集"><Icon name="pen" /><Caret /></SplitButton>
                    </FieldRow>
                    <FieldRow>
                        <label htmlFor="station">測点</label>
                        <Combo $w={115}><select id="station"><option>NO.0 [BP]</option></select><Caret /></Combo>
                        <SplitButton aria-label="測点を追加"><Icon name="plus" /><Caret /></SplitButton>
                        <NavButtons>
                            {["first", "prev", "next", "last"].map(n => <button key={n} aria-label={n}><Icon name={n} /></button>)}
                        </NavButtons>
                    </FieldRow>
                </Fields>
                <h2>横断情報</h2>
            </Group>
            <Group $w={213}>
                <Fields>
                    <FieldRow>
                        <label htmlFor="design">計画</label>
                        <Combo><select id="design"><option>円柱</option></select><Caret /></Combo>
                        <SplitButton aria-label="計画を編集"><Icon name="pen" /><Caret /></SplitButton>
                    </FieldRow>
                    <FieldRow>
                        <label htmlFor="current">現況</label>
                        <Combo><select id="current"><option></option></select><Caret /></Combo>
                        <SplitButton aria-label="現況を編集"><Icon name="pen" /><Caret /></SplitButton>
                    </FieldRow>
                </Fields>
                <h2>構築形状</h2>
            </Group>
            <Group $w={56}>
                <GroupBody><Command icon="auto" text="自動" /></GroupBody>
                <h2>自動抽出</h2>
            </Group>
            <Group $w={141}>
                <GroupBody>
                    <Command icon="trace" text="計画追尾" sub="(参照図面)" caret />
                    <Command icon="preview" text="現況追尾" sub="(プレビュー)" caret disabled />
                </GroupBody>
                <h2>半自動抽出</h2>
            </Group>
            <Group $w={57}>
                <GroupBody><Command icon="text" text="文字" /></GroupBody>
                <h2>手動抽出</h2>
            </Group>
            <Group $w={49}>
                <GroupBody><Command icon="sima" text="SIMA" caret $min={40} /></GroupBody>
                <h2>SIMA</h2>
            </Group>
            <Group $w={543}>
                <GroupBody $gap={2}>
                    {commands.map(([icon, text, sub, caret]) => (
                        <Command key={icon} icon={icon} text={text} sub={sub} caret={caret} />
                    ))}
                </GroupBody>
                <h2>コマンド</h2>
            </Group>
            <Group $w={56}>
                <GroupBody><Command icon="stretch" text="計画伸縮" caret /></GroupBody>
                <h2>計画伸縮</h2>
            </Group>
            <Group $w={125}>
                <GroupBody $gap={4}>
                    <Command icon="screen" text="図面編集" />
                    <Command icon="section" text="横断図作成" />
                </GroupBody>
                <h2>図面</h2>
            </Group>
            <Group $w={90}>
                <ToolList>
                    <button><Icon name="gear" />設定<Caret /></button>
                    <button><Icon name="calc" />土木計算<Caret /></button>
                    <button><Icon name="windows" />ウィンドウ<Caret /></button>
                </ToolList>
                <h2>ツール</h2>
            </Group>
        </Ribbon>
    )
}

function StationForm() {
    return (
        <FormPane>
            <RouteBox>
                <legend>路線情報</legend>
                <RouteRow>
                    <label htmlFor="plan">平面線形</label>
                    <TextField id="plan" $w={166} defaultValue="円柱" readOnly />
                    <label htmlFor="profile">縦断線形</label>
                    <TextField id="profile" $w={166} defaultValue="円柱" readOnly />
                </RouteRow>
            </RouteBox>
            <FormRow $h={39}>
                <Pair $label={54} $gap={10}>
                    <label htmlFor="name">測点名</label>
                    <TextField id="name" $w={145} $gap={4} $bg="#ffffb0" defaultValue="NO.0" />
                    <TextField aria-label="測点名2" $w={145} $gap={4} defaultValue="BP" readOnly />
                    <TextField aria-label="測点名3" $w={145} readOnly />
                </Pair>
                <PushButton $w={61}>編集</PushButton>
            </FormRow>
            <FormRow $h={17}>
                <Pair $label={70}><label htmlFor="dist">追加距離</label><TextField id="dist" $w={70} $right defaultValue="0.000" readOnly /></Pair>
                <Pair $label={75}><label htmlFor="fh">計画高(FH)</label><TextField id="fh" $w={70} $right defaultValue="10.050" readOnly /></Pair>
                <Pair $label={76}><label htmlFor="gh">地盤高(GH)</label><TextField id="gh" $w={70} $right $bg="#fff" /></Pair>
            </FormRow>
            <FormRow $h={33}>
                <Pair $label={70}><label htmlFor="cl">離れ(CL±)</label><TextField id="cl" $w={70} $right defaultValue="0.000" readOnly /></Pair>
                <Pair $label={75}><label htmlFor="dfh">比高(FH±)</label><TextField id="dfh" $w={70} $right defaultValue="0.000" readOnly /></Pair>
                <PushButton $w={105}>離れ・比高編集</PushButton>
            </FormRow>
            <TabRow>
                <Tabs>
                    <SectionTab $active>
                        <svg width="18" height="14" viewBox="0 0 32 24"><Slope y={2} /><path d="M1 1V6M8 1V6M15 1V6M1 2H26" stroke="#222" strokeWidth="2" /></svg>
                        計画断面
                    </SectionTab>
                    <SectionTab>
                        <svg width="16" height="14" viewBox="0 0 16 14"><path d="M0 11H14L16 9V13H0Z" fill="#8a4508" /><path d="M4 1V10M12 1V10M1 4H7M9 4H15M2 7H6M10 7H14" stroke="#1c8a2c" strokeWidth="2" /></svg>
                        現況断面
                    </SectionTab>
                </Tabs>
                <PushButton $w={105}>横断属性設定</PushButton>
            </TabRow>
            <TabPanel>
                <SectionTable title="左側" rows={leftRows} focus />
                <SectionTable title="右側" rows={rightRows} />
            </TabPanel>
        </FormPane>
    )
}

export default function App() {
    return (
        <>
            <GlobalStyle />
            <Window>
                <TitleBar>
                    <AppButton aria-label="メニュー">
                        <svg width="24" height="24" viewBox="0 0 24 24">
                            <path d="M1 1H23V23H1Z" fill="#b80c0c" />
                            <path d="M3 12 11 4H22L14 11H21L11 20H2M5 13H14L9 18M9 8H17" fill="none" stroke="#3a0404" strokeWidth="1.500" />
                            <path d="M3 11 10 4H22L14 10H22L12 20H2" fill="none" stroke="#f4a8a0" strokeWidth=".8" />
                        </svg>
                    </AppButton>
                    <QuickWrap>
                        <QuickBar>
                            {["newFile", "folder", "disk", "brand"].map(n => (
                                <ToolButton key={n} aria-label={n}><Icon name={n} /></ToolButton>
                            ))}
                        </QuickBar>
                        <button aria-label="カスタマイズ"><svg width="6" height="7" viewBox="0 0 6 7"><path d="M0 0H6V1H0ZM0 3H6L3 6Z" fill="#444" /></svg></button>
                    </QuickWrap>
                    <AppTitle>円柱5.tsx - SiTECH 3D</AppTitle>
                    <WindowButtons>
                        <button aria-label="最小化"><svg width="10" height="10" viewBox="0 0 10 10"><path d="M0 5.500H10" stroke="#888" /></svg></button>
                        <button aria-label="元に戻す"><svg width="10" height="10" viewBox="0 0 10 10"><path d="M.5 2.500H7.500V9.500H.5ZM2.500 2.500V.5H9.500V7.500H7.500" fill="none" stroke="#888" /></svg></button>
                        <button aria-label="閉じる"><svg width="10" height="10" viewBox="0 0 10 10"><path d="M0 0 10 10M10 0 0 10" stroke="#888" /></svg></button>
                    </WindowButtons>
                </TitleBar>
                <MenuBar>
                    <MenuTab>座標管理</MenuTab>
                    <MenuTab>平面</MenuTab>
                    <MenuTab>縦断</MenuTab>
                    <MenuTab $active>横断</MenuTab>
                    <MenuTab>ヘルプ</MenuTab>
                    <ThemeButton>
                        テーマ
                        <svg width="11" height="6" viewBox="0 0 11 6"><path d="M3 1 5.500 4 8 1" fill="none" stroke="#fff" /></svg>
                    </ThemeButton>
                </MenuBar>
                <TopRibbon />
                <Workspace>
                    <StationForm />
                    <ViewColumn>
                        <Pane $flex={27}>
                            <PaneTitle>
                                <h2>参照図面 【 平面図(場所打ち杭).sfc 】</h2>
                                <PaneButtons />
                            </PaneTitle>
                            <Toolbar $pad={2}>
                                <Tools list={sheetTools} />
                                <SheetPicker>
                                    <Combo $w={146} $white>
                                        <select aria-label="シート"><option>新規シート1 (1/50)</option></select><Caret />
                                    </Combo>
                                </SheetPicker>
                                <Tools list={sheetTools2} />
                            </Toolbar>
                            <DrawingArea>
                                <DrawingMain>
                                    <Prompt><span>【コマンドを選択してください】</span></Prompt>
                                    <Canvas><PlanDrawing /></Canvas>
                                    <SheetBar>
                                        {["M2 1V8M7 1 3 4.500 7 8Z", "M6 1 2 4.500 6 8Z", "M3 1 7 4.500 3 8Z", "M7 1V8M2 1 6 4.500 2 8Z"].map((d, i) => (
                                            <PageButton key={i} aria-label={"シート移動" + (i + 1)}>
                                                <svg width="9" height="9" viewBox="0 0 9 9"><path d={d} fill="#333" stroke="#333" strokeWidth=".6" /></svg>
                                            </PageButton>
                                        ))}
                                        <SheetTab $active>平面図(場所打ち杭).sfc</SheetTab>
                                        <SheetTab>正面図(場所打ち杭).sfc</SheetTab>
                                    </SheetBar>
                                </DrawingMain>
                                <SideTools>
                                    {sideTools.map((n, i) => {
                                        if (n === "|") return <Divider key={i} $flat />
                                        if (n === ">") return (
                                            <button key={i} className="more" aria-label="その他">
                                                <svg width="4" height="6" viewBox="0 0 4 6"><path d="M0 0V6L4 3Z" fill="#555" /></svg>
                                            </button>
                                        )
                                        return <button key={i} aria-label={n}><Icon name={n} /></button>
                                    })}
                                </SideTools>
                            </DrawingArea>
                        </Pane>
                        <Pane $flex={25}>
                            <PaneTitle $solid>
                                <h2>3 D</h2>
                                <PaneButtons />
                            </PaneTitle>
                            <Toolbar $pad={5}>
                                <Tools list={solidTools} />
                            </Toolbar>
                            <Canvas $solid><SolidView /></Canvas>
                        </Pane>
                        <ViewTabs>
                            <ViewTab><Icon name="plan" />平面</ViewTab>
                            <ViewTab><Icon name="profile" />縦断</ViewTab>
                            <ViewTab><Icon name="cross" />横断</ViewTab>
                            <ViewTab $active><Icon name="block" />3 D</ViewTab>
                        </ViewTabs>
                    </ViewColumn>
                </Workspace>
            </Window>
        </>
    )
}
